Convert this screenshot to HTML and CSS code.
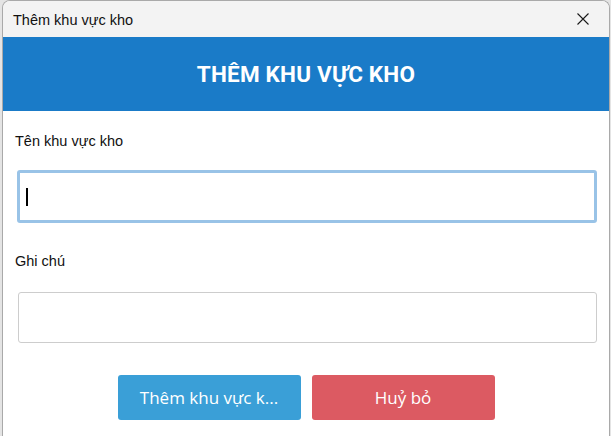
FILE: index.html
```html
<!DOCTYPE html>
<html lang="vi">
<head>
<meta charset="utf-8">
<title>Thêm khu vực kho</title>
<link rel="stylesheet" href="styles.css">
</head>
<body>
<div class="desk">
  <div class="window">
    <div class="titlebar">
      <span class="title">Thêm khu vực kho</span>
      <span class="close">
        <svg width="12" height="12" viewBox="0 0 12 12"><path d="M0.5 0.5 L11.5 11.5 M11.5 0.5 L0.5 11.5" stroke="#1a1a1a" stroke-width="1.1" fill="none"/></svg>
      </span>
    </div>
    <div class="header">THÊM KHU VỰC KHO</div>
    <div class="content">
      <div class="label lbl-first">Tên khu vực kho</div>
      <div class="field focused"><span class="caret"></span></div>
      <div class="label lbl-second">Ghi chú</div>
      <div class="field plain"></div>
      <div class="actions">
        <button class="btn btn-add">Thêm khu vực k...</button>
        <button class="btn btn-cancel">Huỷ bỏ</button>
      </div>
    </div>
  </div>
</div>
</body>
</html>
```
FILE: styles.css
```css
html, body {
  margin: 0;
  padding: 0;
  height: 100%;
  overflow: hidden;
}
body {
  background: #e4e4e4;
  font-family: "Liberation Sans", Arial, sans-serif;
}
.desk {
  box-sizing: border-box;
  padding-left: 2px;
  height: 100%;
}
.window {
  box-sizing: border-box;
  width: 608px;
  height: 100%;
  background: #ffffff;
  border: 1px solid #a9a9a9;
  border-bottom: none;
  border-radius: 8px 8px 0 0;
  overflow: hidden;
}
.titlebar {
  height: 36px;
  background: #f3f3f3;
  display: flex;
  align-items: center;
  justify-content: space-between;
  padding: 0 20px 0 10px;
}
.title {
  font-family: "Liberation Sans", Arial, sans-serif;
  font-size: 14.5px;
  color: #111;
  padding-top: 2px;
}
.close {
  display: flex;
  width: 12px;
  height: 12px;
}
.header {
  height: 74px;
  background: #1a7bc8;
  color: #ffffff;
  font-family: Roboto, "Liberation Sans", sans-serif;
  font-weight: 700;
  font-size: 22.5px;
  display: flex;
  align-items: center;
  justify-content: center;
  letter-spacing: 0.2px;
}
.content {
  padding: 0 12px 0 12px;
}
.label {
  font-family: "Liberation Sans", Arial, sans-serif;
  font-size: 14.5px;
  line-height: 20px;
  height: 20px;
  color: #111;
}
.lbl-first {
  margin-top: 20px;
}
.lbl-second {
  margin-top: 28px;
}
.field {
  box-sizing: border-box;
  background: #fff;
  border-radius: 3px;
  display: flex;
  align-items: center;
}
.focused {
  margin-top: 19px;
  margin-left: 2px;
  height: 53px;
  border: 3px solid #99c3e7;
  padding-left: 6px;
}
.caret {
  display: block;
  width: 2px;
  height: 18px;
  background: #000;
}
.plain {
  margin-top: 21px;
  margin-left: 3px;
  height: 51px;
  border: 1px solid #cdcdcd;
}
.actions {
  margin-top: 32px;
  display: flex;
  justify-content: center;
  gap: 11px;
}
.btn {
  width: 183px;
  height: 45px;
  border: none;
  border-radius: 3px;
  color: #ffffff;
  font-family: "Open Sans", "Noto Sans", sans-serif;
  font-size: 17px;
  padding: 0;
}
.btn-add {
  background: #3a9fd7;
}
.btn-cancel {
  background: #dc5a62;
}
```
